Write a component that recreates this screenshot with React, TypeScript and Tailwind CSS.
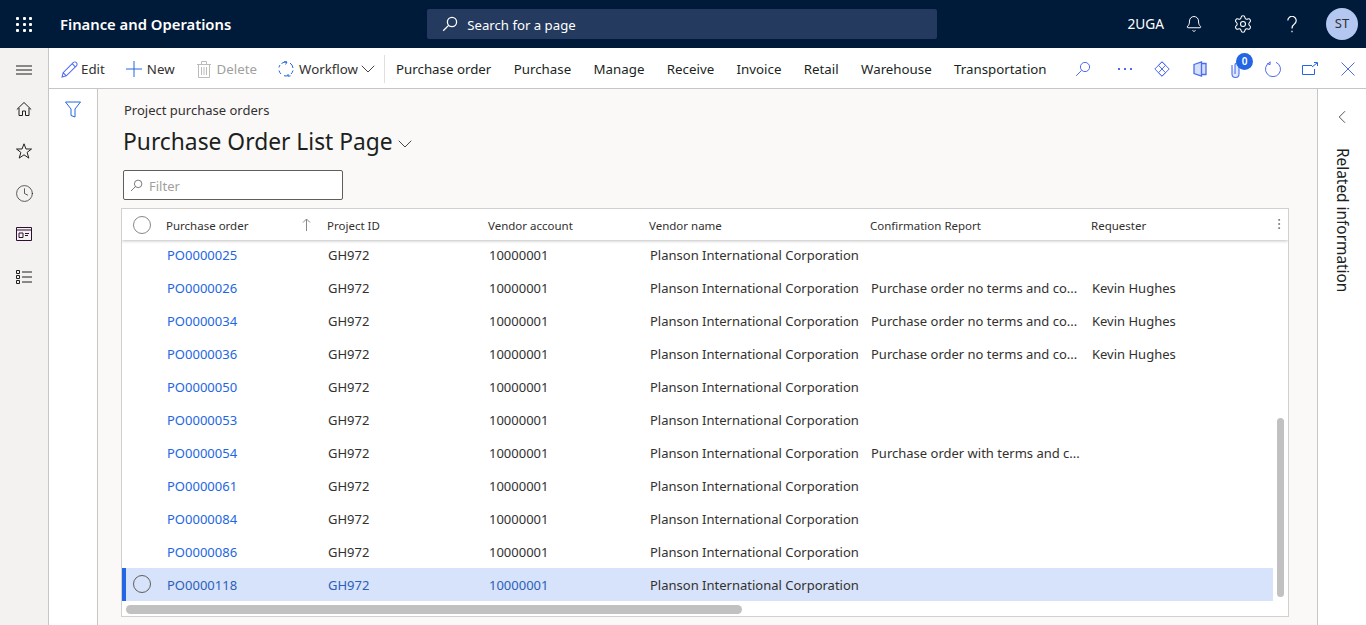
// App.tsx
// Purchase order list page
import { ChevronDown, ChevronLeft, MoreVertical, Bell, Settings, Clock } from "lucide-react";

const font = "font-['Noto_Sans','Open_Sans',sans-serif]";

const terms = "Purchase order no terms and co...";
const rows = [
	{ po: "PO0000025" },
	{ po: "PO0000026", report: terms, requester: "Kevin Hughes" },
	{ po: "PO0000034", report: terms, requester: "Kevin Hughes" },
	{ po: "PO0000036", report: terms, requester: "Kevin Hughes" },
	{ po: "PO0000050" },
	{ po: "PO0000053" },
	{ po: "PO0000054", report: "Purchase order with terms and c..." },
	{ po: "PO0000061" },
	{ po: "PO0000084" },
	{ po: "PO0000086" },
	{ po: "PO0000118", selected: true },
];

const menus = ["Purchase order", "Purchase", "Manage", "Receive", "Invoice", "Retail", "Warehouse", "Transportation"];

function SearchIcon({ className, width = 1 }: { className?: string; width?: number }) {
	return (
		<svg viewBox="0 0 16 16" fill="none" stroke="currentColor" strokeWidth={width} className={className}>
			<circle cx="10" cy="6" r="4.6" />
			<path d="M6.6 9.4 1.2 14.8" />
		</svg>
	);
}

function Toolbar() {
	return (
		<div className="flex h-[41px] shrink-0 items-center border-b border-[#c8c6c4] bg-white pt-[2px] text-[13.3px]">
			<div className="ml-[12px] flex items-center gap-[3px] text-[#323130]">
				<svg viewBox="0 0 16 16" fill="none" stroke="#4f6bed" strokeWidth="1" className="h-[17px] w-[17px]">
					<path d="M1 15l1-4L11.500 1.500a1.800 1.800 0 0 1 3 3L5 14zM2 11l3 3M10.500 2.500l3 3" />
				</svg>
				<span className="mt-[2px]">Edit</span>
			</div>
			<div className="ml-[21px] flex items-center gap-[5px] text-[#323130]">
				<svg viewBox="0 0 16 16" fill="none" stroke="#2266e3" strokeWidth="1" className="h-[16px] w-[16px]">
					<path d="M8 0v16M0 8h16" />
				</svg>
				<span className="mt-[2px]">New</span>
			</div>
			<div className="ml-[22px] flex items-center gap-[6px] text-[#a19f9d]">
				<svg viewBox="0 0 14 17" fill="none" stroke="#bdbbb8" strokeWidth="1" className="h-[17px] w-[14px]">
					<path d="M0 3.500h14M4.500 3.500v-3h5v3M1.500 3.500v13h11v-13M4.500 6v8M7 6v8M9.500 6v8" />
				</svg>
				<span className="mt-[2px]">Delete</span>
			</div>
			<div className="ml-[21px] flex items-center gap-[5px] text-[#323130]">
				<svg viewBox="0 0 16 16" fill="none" stroke="#2266e3" strokeWidth="1" className="h-[16px] w-[16px]">
					<path d="M3.500 2.500A7 7 0 0 1 9 1M12 2a7 7 0 0 1 3 5M15 9.500A7 7 0 0 1 13 13M10 14.700A7 7 0 0 1 6 14.700M3 13A7 7 0 0 1 1 9.500M1 6.500A7 7 0 0 1 2 4M6 .8 9 1 7.500 3.500M10 13l.2 2.300 2.300-.5" />
				</svg>
				<span className="mt-[2px]">Workflow</span>
			</div>
			<ChevronDown size={24} strokeWidth={0.9} className="ml-[-2px] text-[#323130]" />
			<div className="ml-[4px] h-[28px] w-px bg-[#e1dfdd]" />
			<div className="ml-[11px] mt-[2px] flex gap-[22.400px] text-[#201f1e]">
				{menus.map((m) => (
					<span key={m}>{m}</span>
				))}
			</div>
			<div className="ml-auto flex items-center pr-[10px] text-[#4f6bed]">
				<SearchIcon className="h-[16px] w-[16px]" />
				<svg viewBox="0 0 16 16" fill="currentColor" className="ml-[26px] h-[16px] w-[16px]">
					<path d="M1 7h2v2H1zM7 7h2v2H7zM13 7h2v2h-2z" />
				</svg>
				<svg viewBox="0 0 16 16" fill="none" stroke="currentColor" strokeWidth="1" className="ml-[21px] h-[16px] w-[16px]">
					<path d="M8 .8 15.200 8 8 15.200.8 8zM8 .8 4.500 4.300 8 8l3.500-3.700zM8 8l-3.500 3.700L8 15.200l3.500-3.500z" />
				</svg>
				<svg viewBox="0 0 16 16" fill="#2266e3" fillOpacity="0.2" stroke="currentColor" strokeWidth="1.300" className="ml-[22px] h-[16px] w-[16px]">
					<path d="M2 3.500 9.500 1v14L2 12.500zM9.500 2.500H14v11H9.500" />
				</svg>
				<div className="relative ml-[21px] h-[16px] w-[16px]">
					<svg viewBox="0 0 16 16" fill="#2266e3" fillOpacity="0.15" stroke="currentColor" strokeWidth="1.100" className="h-[18px] w-[16px]">
						<path d="M3 3v9a3.500 3.500 0 0 0 7 0V3a2 2 0 0 0-4 0v9" />
					</svg>
					<span className="absolute left-[7px] top-[-8px] flex h-[17px] w-[17px] items-center justify-center rounded-full bg-[#2266e3] text-[10px] font-semibold text-white">
						0
					</span>
				</div>
				<svg viewBox="0 0 16 16" fill="none" stroke="currentColor" strokeWidth="1" className="ml-[20px] h-[16px] w-[16px]">
					<path d="M5 1.300A7.500 7.500 0 1 0 11 1.300M5.200.5 5 3.700 2.200 2.500" />
				</svg>
				<svg viewBox="0 0 16 16" fill="none" stroke="#2266e3" strokeWidth="1" className="ml-[21px] h-[16px] w-[16px]">
					<path d="M10 4.500H.5v9h12V8M10 6l5-4M12 1.500h3.500V5" />
				</svg>
				<svg viewBox="0 0 16 16" fill="none" stroke="currentColor" strokeWidth="1" className="ml-[22px] h-[16px] w-[16px]">
					<path d="M1.500 1.500l13 13M14.500 1.500l-13 13" />
				</svg>
			</div>
		</div>
	);
}

function LeftNav() {
	return (
		<div className="flex w-[49px] shrink-0 flex-col items-center border-r border-[#c8c6c4] bg-[#f3f2f1] pt-[17px] text-[#201f1e]">
			<svg viewBox="0 0 16 10" fill="none" stroke="currentColor" strokeWidth="1" className="h-[10px] w-[16px]">
				<path d="M0 1h16M0 5h16M0 9h16" />
			</svg>
			<svg viewBox="0 0 16 16" fill="none" stroke="currentColor" strokeWidth="1" className="mt-[26px] h-[16px] w-[16px]">
				<path d="M.8 8.500 8 1.500l7.200 7M3 7v7.500h3.500V10h3v4.500H13V7" />
			</svg>
			<svg viewBox="0 0 16 16" fill="none" stroke="currentColor" strokeWidth="1" className="mt-[26px] h-[16px] w-[16px]">
				<path d="M8 .8l2 5.200h5.500l-4.400 3.400 1.700 5.700L8 11.800l-4.800 3.300 1.700-5.700L.5 6H6z" />
			</svg>
			<Clock size={19} strokeWidth={0.9} className="mt-[25px]" />
			<svg viewBox="0 0 16 14" fill="none" stroke="currentColor" strokeWidth="1" className="mt-[24px] h-[14px] w-[16px] text-[#2e0f33]">
				<path d="M.5.500h15v13H.5zM.5 3h15M3 6h4v4.500H3zM9 6.500h4M9 8.500h3" />
			</svg>
			<svg viewBox="0 0 16 14" fill="none" stroke="currentColor" strokeWidth="1" className="mt-[29px] h-[14px] w-[16px]">
				<path d="M.5.500h3v3h-3zM.5 5.500h3v3h-3zM.5 10.500h3v3h-3zM6 2h10M6 7h10M6 12h10" />
			</svg>
		</div>
	);
}

function Grid() {
	return (
		<div className="relative ml-[23px] mr-[28px] mt-[8px] flex-1 overflow-hidden border border-[#d2d0ce] bg-white">
			<div className="relative z-10 flex h-[31px] items-center bg-white pt-[2px] text-[11.500px] text-[#323130] shadow-[0_1px_3px_rgba(0,0,0,0.25)]">
				<div className="ml-[11px] mt-[-2px] h-[18px] w-[18px] rounded-full border border-[#8a8886]" />
				<div className="ml-[15px] flex w-[161px] items-center pr-[16px]">
					<span className="flex-1">Purchase order</span>
					<svg viewBox="0 0 9 13" fill="none" stroke="#8a8886" strokeWidth="1" className="mt-[-2px] h-[13px] w-[9px]">
						<path d="M4.500 13V1M1 4.500 4.500 1 8 4.500" />
					</svg>
				</div>
				<div className="w-[161px]">Project ID</div>
				<div className="w-[161px]">Vendor account</div>
				<div className="w-[221px]">Vendor name</div>
				<div className="w-[221px]">Confirmation Report</div>
				<div>Requester</div>
				<MoreVertical size={14} strokeWidth={1.200} className="absolute right-[2px] top-[8px] text-[#605e5c]" />
			</div>
			<div className="mr-[15px] mt-[-2px] text-[13px] text-[#323130]">
				{rows.map((r) => (
					<div key={r.po} className={`relative flex h-[33px] items-center pl-[45px] pt-[2px] ${r.selected ? "bg-[#d7e3fa]" : ""}`}>
						{r.selected && <div className="absolute inset-y-0 left-0 w-[4px] bg-[#2266e3]" />}
						{r.selected && <div className="absolute left-[11px] top-[7px] h-[18px] w-[18px] rounded-full border border-[#605e5c]" />}
						<div className={`w-[161px] ${r.selected ? "text-[#2b5fb8]" : "text-[#2266e3]"}`}>{r.po}</div>
						<div className={`w-[161px] ${r.selected ? "text-[#2b5fb8]" : ""}`}>GH972</div>
						<div className={`w-[161px] ${r.selected ? "text-[#2b5fb8]" : ""}`}>10000001</div>
						<div className="w-[221px]">Planson International Corporation</div>
						<div className="w-[221px] truncate">{r.report}</div>
						<div>{r.requester}</div>
					</div>
				))}
			</div>
			{/* Scrollbars */}
			<div className="absolute bottom-[2px] left-[4px] h-[9px] w-[616px] rounded-full bg-[#c1c1c1]" />
			<div className="absolute right-[4px] top-[209px] h-[179px] w-[7px] rounded-full bg-[#c1c1c1]" />
		</div>
	);
}

export default function App() {
	return (
		<div className={`flex h-[625px] w-[1366px] flex-col overflow-hidden bg-white ${font}`}>
			{/* Top bar */}
			<div className="flex h-[48px] shrink-0 items-center bg-[#001a3a] text-white">
				<div className="ml-[16px] grid h-[15px] w-[16px] grid-cols-3 gap-x-[3.500px] gap-y-[3px]">
					{Array.from({ length: 9 }).map((_, i) => (
						<div key={i} className="h-[3px] w-[3px] rounded-[1px] bg-white" />
					))}
				</div>
				<div className="ml-[28px] text-[14.800px] font-semibold">Finance and Operations</div>
				<div className="ml-[196px] flex h-[30px] w-[510px] items-center gap-[9px] rounded-[2px] bg-[#243a5e] pl-[15px] text-[13.200px]">
					<SearchIcon width={1.300} className="h-[16px] w-[16px]" />
					<span className="mt-[3px]">Search for a page</span>
				</div>
				<div className="ml-auto flex items-center pr-[8px]">
					<span className="text-[13.700px]">2UGA</span>
					<Bell size={18} strokeWidth={1.300} className="ml-[21px]" />
					<Settings size={20} strokeWidth={1.300} className="ml-[30px]" />
					<svg viewBox="0 0 10 17" fill="none" stroke="currentColor" strokeWidth="1.200" className="ml-[34px] h-[17px] w-[10px]">
						<path d="M.8 4.500a4.200 4.200 0 1 1 6.800 3.300C6 9 5 10 5 12.500M5 14.800v1.500" />
					</svg>
					<div className="ml-[29px] flex h-[32px] w-[32px] items-center justify-center rounded-full bg-[#b4c7f0] text-[13px] text-[#323130]">ST</div>
				</div>
			</div>
			<div className="flex min-h-0 flex-1">
				<LeftNav />
				<div className="flex min-w-0 flex-1 flex-col">
					<Toolbar />
					<div className="flex min-h-0 flex-1">
						{/* Filter rail */}
						<div className="flex w-[49px] shrink-0 justify-center border-r border-[#c8c6c4] bg-white pt-[12px]">
							<svg viewBox="0 0 16 17" fill="none" stroke="#2266e3" strokeWidth="1" className="h-[17px] w-[16px]">
								<path d="M.5 1h15l-5.500 7v8l-4-1.500V8z" />
							</svg>
						</div>
						{/* Page content */}
						<div className="flex min-w-0 flex-1 flex-col bg-[#faf9f8] pb-[8px]">
							<div className="ml-[26px] mt-[11px] text-[13px] leading-[20px] text-[#323130]">Project purchase orders</div>
							<div className="ml-[25px] mt-[6px] flex items-center text-[22.800px] leading-[32px] text-[#201f1e]">
								Purchase Order List Page
								<ChevronDown size={24} strokeWidth={0.9} className="mt-[4px] text-[#323130]" />
							</div>
							<div className="ml-[25px] mt-[12px] flex h-[30px] w-[220px] items-center gap-[6px] rounded-[2px] border border-[#605e5c] bg-white pl-[6px] text-[13px] text-[#a19f9d]">
								<SearchIcon className="h-[13px] w-[13px] text-[#605e5c]" />
								<span className="mt-[3px]">Filter</span>
							</div>
							<Grid />
						</div>
						{/* Related information */}
						<div className="flex w-[49px] shrink-0 flex-col items-center border-l border-[#c8c6c4] bg-white pt-[17px]">
							<ChevronLeft size={22} strokeWidth={0.9} className="text-[#323130]" />
							<div className="mt-[20px] text-[15.400px] leading-[20px] text-[#201f1e] [writing-mode:vertical-rl]">Related information</div>
						</div>
					</div>
				</div>
			</div>
		</div>
	);
}
